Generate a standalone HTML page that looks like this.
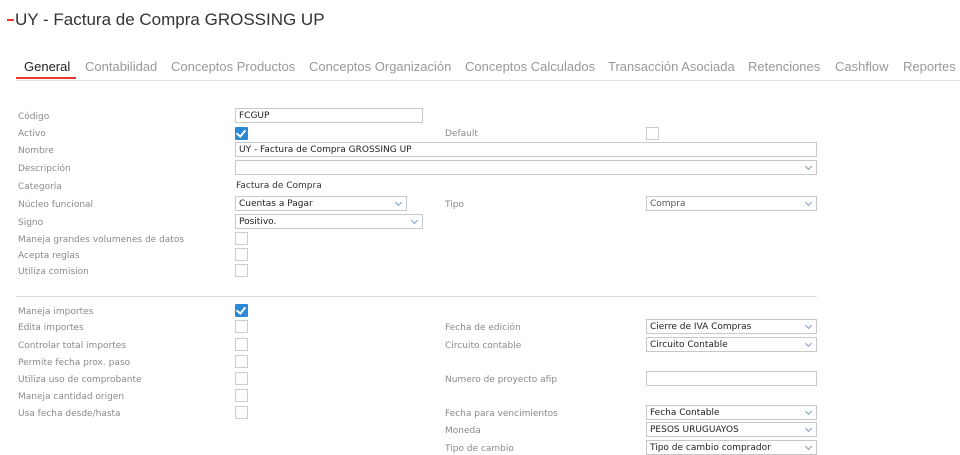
<html><head><style>
body{margin:0;width:960px;height:454px;background:#fff;overflow:hidden;position:relative;font-family:"DejaVu Sans","Liberation Sans",sans-serif}
.a{position:absolute}
.t{position:absolute;font-size:13px;color:#999;font-family:"Liberation Sans",sans-serif;top:59px}
.l{position:absolute;font-size:9px;color:#8a8a8a;line-height:12px;margin-top:1px}
.i{position:absolute;height:15px;border:1px solid #c8c8c8;box-sizing:border-box;font-size:9px;color:#222;line-height:14px;padding-left:3px;background:#fff}
.s::after{content:"";position:absolute;right:5px;top:3px;width:4px;height:4px;border-right:1px solid #7a9cc6;border-bottom:1px solid #7a9cc6;transform:rotate(45deg)}
.c{position:absolute;left:235px;width:13px;height:13px;border:1px solid #ccc;box-sizing:border-box}
</style></head><body>
<div class="a" style="left:7px;top:19px;width:7px;height:2px;background:#e8362b"></div>
<div class="a" style="left:15px;top:10px;font-size:17px;color:#333;font-family:'Liberation Sans',sans-serif">UY - Factura de Compra GROSSING UP</div>
<div class="a" style="left:16px;top:80px;width:944px;height:1px;background:#e0e0e0"></div>
<div class="a" style="left:16px;top:77px;width:60px;height:2px;background:#e8362b"></div>
<div class="t" style="left:24px;color:#222">General</div>
<div class="t" style="left:85px">Contabilidad</div>
<div class="t" style="left:171px">Conceptos Productos</div>
<div class="t" style="left:309px">Conceptos Organización</div>
<div class="t" style="left:465px">Conceptos Calculados</div>
<div class="t" style="left:608px">Transacción Asociada</div>
<div class="t" style="left:748px">Retenciones</div>
<div class="t" style="left:835px">Cashflow</div>
<div class="t" style="left:903px">Reportes</div>

<div class="l" style="left:18px;top:110px">Código</div>
<div class="l" style="left:18px;top:127px">Activo</div>
<div class="l" style="left:18px;top:144px">Nombre</div>
<div class="l" style="left:18px;top:162px">Descripción</div>
<div class="l" style="left:18px;top:180px">Categoría</div>
<div class="l" style="left:18px;top:198px">Núcleo funcional</div>
<div class="l" style="left:18px;top:216px">Signo</div>
<div class="l" style="left:18px;top:233px">Maneja grandes volumenes de datos</div>
<div class="l" style="left:18px;top:249px">Acepta reglas</div>
<div class="l" style="left:18px;top:265px">Utiliza comision</div>
<div class="l" style="left:445px;top:127px">Default</div>
<div class="l" style="left:445px;top:198px">Tipo</div>

<div class="i" style="left:235px;top:108px;width:188px">FCGUP</div>
<div class="a" style="left:235px;top:127px;width:13px;height:13px;background:#2a8ad4;border-radius:1px"><div class="a" style="left:3px;top:1px;width:4px;height:7px;border-right:2px solid #fff;border-bottom:2px solid #fff;transform:rotate(40deg)"></div></div>
<div class="c" style="left:646px;top:127px"></div>
<div class="i" style="left:235px;top:142px;width:582px">UY - Factura de Compra GROSSING UP</div>
<div class="i s" style="left:235px;top:160px;width:582px"></div>
<div class="a" style="left:236px;top:181px;font-size:9px;color:#333">Factura de Compra</div>
<div class="i s" style="left:235px;top:196px;width:172px">Cuentas a Pagar</div>
<div class="i s" style="left:646px;top:196px;width:171px;color:#555">Compra</div>
<div class="i s" style="left:235px;top:214px;width:188px">Positivo.</div>
<div class="c" style="top:232px"></div>
<div class="c" style="top:248px"></div>
<div class="c" style="top:264px"></div>

<div class="a" style="left:16px;top:296px;width:801px;height:1px;background:#ddd"></div>

<div class="l" style="left:18px;top:305px">Maneja importes</div>
<div class="l" style="left:18px;top:321px">Edita importes</div>
<div class="l" style="left:18px;top:339px">Controlar total importes</div>
<div class="l" style="left:18px;top:356px">Permite fecha prox. paso</div>
<div class="l" style="left:18px;top:373px">Utiliza uso de comprobante</div>
<div class="l" style="left:18px;top:390px">Maneja cantidad origen</div>
<div class="l" style="left:18px;top:407px">Usa fecha desde/hasta</div>
<div class="a" style="left:235px;top:304px;width:13px;height:13px;background:#2a8ad4;border-radius:1px"><div class="a" style="left:3px;top:1px;width:4px;height:7px;border-right:2px solid #fff;border-bottom:2px solid #fff;transform:rotate(40deg)"></div></div>
<div class="c" style="top:320px"></div>
<div class="c" style="top:338px"></div>
<div class="c" style="top:355px"></div>
<div class="c" style="top:372px"></div>
<div class="c" style="top:389px"></div>
<div class="c" style="top:406px"></div>

<div class="l" style="left:445px;top:321px">Fecha de edición</div>
<div class="l" style="left:445px;top:339px">Circuito contable</div>
<div class="l" style="left:445px;top:373px">Numero de proyecto afip</div>
<div class="l" style="left:445px;top:407px">Fecha para vencimientos</div>
<div class="l" style="left:445px;top:424px">Moneda</div>
<div class="l" style="left:445px;top:442px">Tipo de cambio</div>
<div class="i s" style="left:646px;top:319px;width:171px">Cierre de IVA Compras</div>
<div class="i s" style="left:646px;top:337px;width:171px">Circuito Contable</div>
<div class="i" style="left:646px;top:371px;width:171px"></div>
<div class="i s" style="left:646px;top:405px;width:171px">Fecha Contable</div>
<div class="i s" style="left:646px;top:422px;width:171px">PESOS URUGUAYOS</div>
<div class="i s" style="left:646px;top:440px;width:171px">Tipo de cambio comprador</div>
</body></html>
